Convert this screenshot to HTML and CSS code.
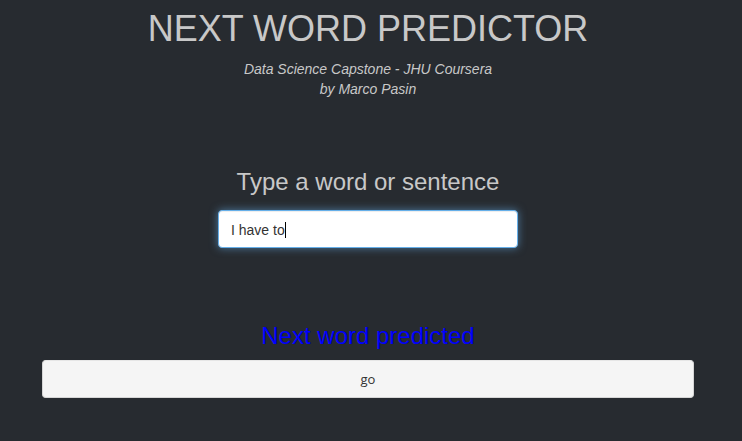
FILE: index.html
```html
<!DOCTYPE html>
<html lang="en">
<head>
<meta charset="utf-8">
<title>Next Word Predictor</title>
<link rel="stylesheet" href="styles.css">
</head>
<body>
<div class="page">
  <header class="header">
    <h1 class="title">NEXT WORD PREDICTOR</h1>
    <p class="subtitle">Data Science Capstone - JHU Coursera<br>by Marco Pasin</p>
  </header>
  <section class="entry">
    <h3 class="prompt">Type a word or sentence</h3>
    <div class="input-wrap">
      <input class="text-input" type="text" value="I have to">
      <span class="caret"></span>
    </div>
  </section>
  <section class="result">
    <h3 class="predicted">Next word predicted</h3>
    <button class="go-btn" type="button">go</button>
  </section>
</div>
</body>
</html>
```
FILE: styles.css
```css
html, body {
  margin: 0;
  padding: 0;
  background: #272b30;
  height: 100%;
}
body {
  font-family: "Liberation Sans", Arial, sans-serif;
  color: #c8c8c8;
}
.page {
  padding: 9px 48px 0 42px;
  display: flex;
  flex-direction: column;
  align-items: center;
}
.header {
  display: flex;
  flex-direction: column;
  align-items: center;
}
.title {
  margin: 0;
  font-size: 36px;
  line-height: 39.6px;
  font-weight: 400;
  color: #c8c8c8;
}
.subtitle {
  margin: 10px 0 0;
  font-size: 14px;
  line-height: 20px;
  font-style: italic;
  text-align: center;
  color: #c8c8c8;
}
.entry {
  margin-top: 70px;
  display: flex;
  flex-direction: column;
  align-items: center;
}
.prompt {
  margin: 0;
  font-size: 24px;
  line-height: 26.4px;
  font-weight: 400;
  color: #c8c8c8;
}
.input-wrap {
  position: relative;
  margin-top: 15px;
}
.text-input {
  display: block;
  box-sizing: border-box;
  width: 300px;
  height: 38px;
  padding: 8px 12px 7px;
  font-family: "Liberation Sans", Arial, sans-serif;
  font-size: 14px;
  color: #333333;
  background: #ffffff;
  border: 1px solid #66afe9;
  border-radius: 4px;
  outline: none;
  box-shadow: inset 0 1px 1px rgba(0,0,0,.075), 0 0 8px rgba(102,175,233,.6);
}
.caret {
  position: absolute;
  left: 67px;
  top: 12px;
  width: 1px;
  height: 16px;
  background: #000000;
}
.result {
  align-self: stretch;
  margin-top: 75px;
  display: flex;
  flex-direction: column;
  align-items: center;
}
.predicted {
  margin: 0;
  font-size: 24px;
  line-height: 26.4px;
  font-weight: 400;
  color: #0000ff;
}
.go-btn {
  margin-top: 11px;
  align-self: stretch;
  box-sizing: border-box;
  height: 38px;
  background: #f5f5f5;
  border: 1px solid #d6d6d6;
  border-top-color: #e6e6e6;
  border-radius: 4px;
  font-family: "Open Sans", "Noto Sans", sans-serif;
  font-size: 13px;
  color: #333333;
  padding: 0;
}
```
